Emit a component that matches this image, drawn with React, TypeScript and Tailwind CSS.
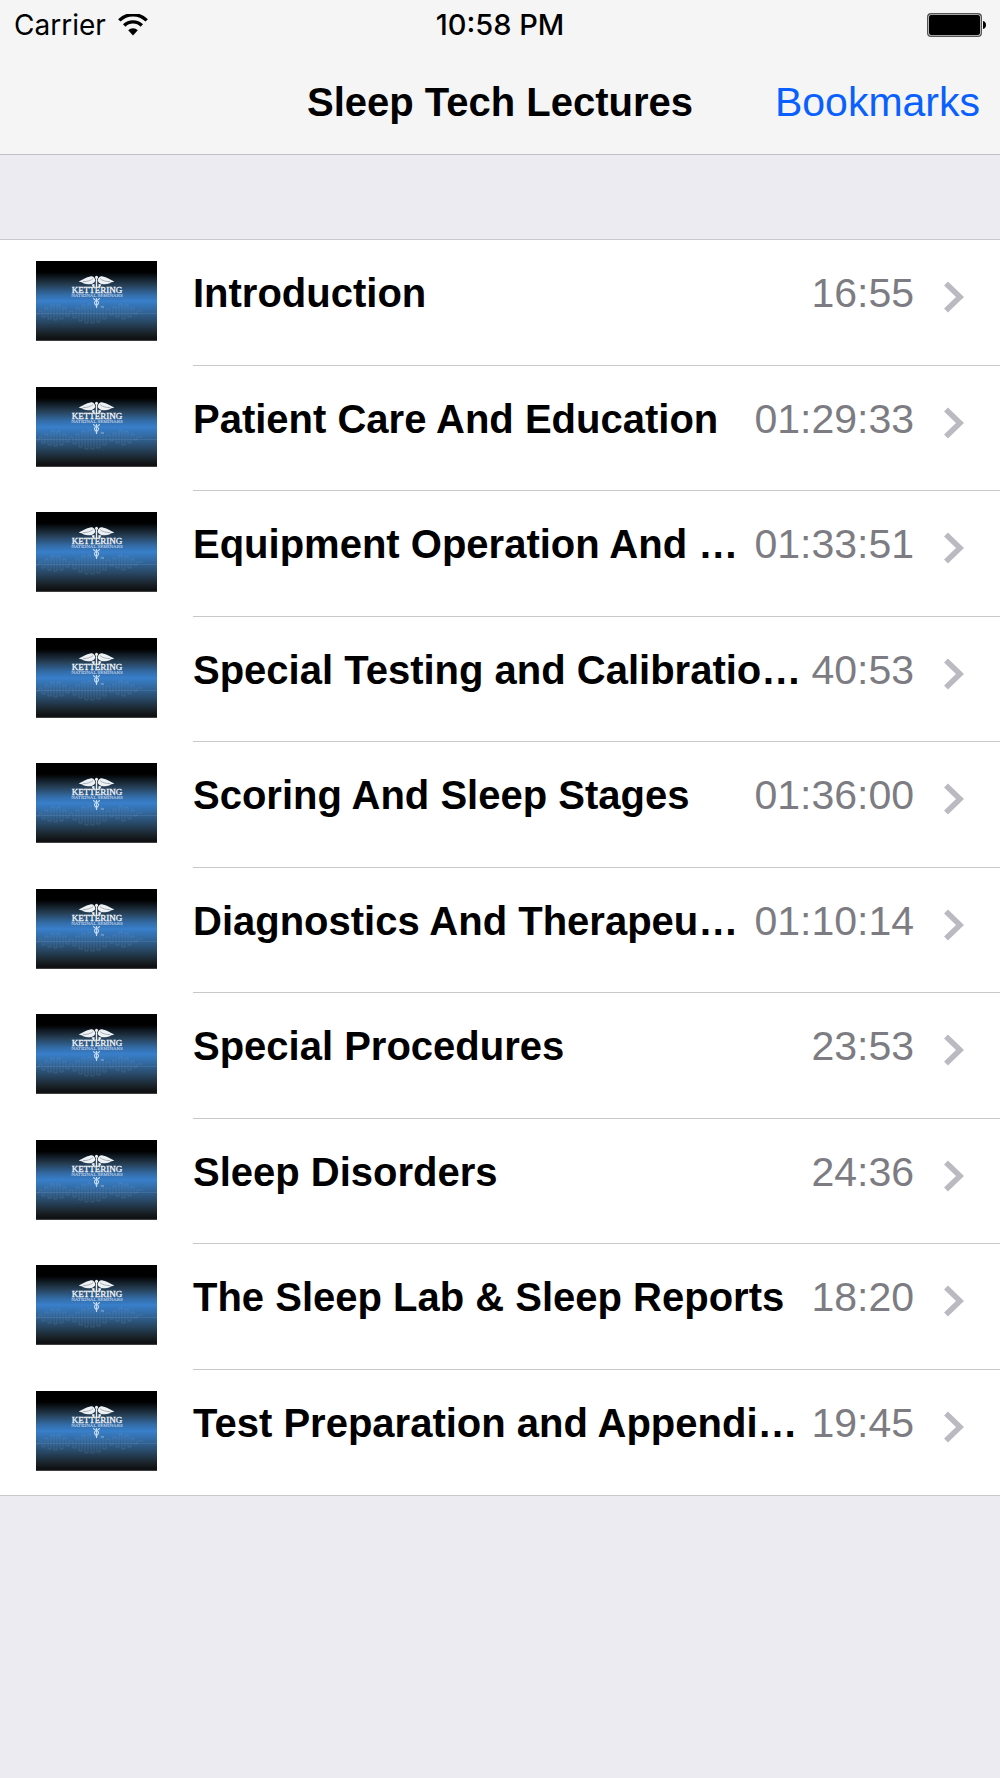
type Lecture = {
  id: number;
  title: string;
  duration: string;
};

const lectures: Lecture[] = [
  { id: 1, title: "Introduction", duration: "16:55" },
  { id: 2, title: "Patient Care And Education", duration: "01:29:33" },
  { id: 3, title: "Equipment Operation And …", duration: "01:33:51" },
  { id: 4, title: "Special Testing and Calibratio…", duration: "40:53" },
  { id: 5, title: "Scoring And Sleep Stages", duration: "01:36:00" },
  { id: 6, title: "Diagnostics And Therapeu…", duration: "01:10:14" },
  { id: 7, title: "Special Procedures", duration: "23:53" },
  { id: 8, title: "Sleep Disorders", duration: "24:36" },
  { id: 9, title: "The Sleep Lab & Sleep Reports", duration: "18:20" },
  { id: 10, title: "Test Preparation and Appendi…", duration: "19:45" },
];

function WifiIcon() {
  return (
    <svg width="30" height="22" viewBox="0 0 30 22" fill="none" stroke="black" aria-hidden="true">
      <path d="M1.300 6.400a19.400 19.400 0 0 1 27.400 0" strokeWidth="3.400" />
      <path d="M6.200 11.500a12.400 12.400 0 0 1 17.600 0" strokeWidth="3.400" />
      <path d="M10.200 16.200a6.800 6.800 0 0 1 9.600 0L15 21.400z" fill="black" stroke="none" />
    </svg>
  );
}

function BatteryIcon() {
  return (
    <svg width="59" height="24" viewBox="0 0 59 24" aria-hidden="true">
      <rect x="0.7" y="0.7" width="53.600" height="22.600" rx="3.400" fill="none" stroke="#555" strokeWidth="1.400" />
      <rect x="2" y="2" width="51" height="20" rx="2" />
      <path d="M56 8c2 0.400 3 2 3 4s-1 3.600-3 4z" />
    </svg>
  );
}

function Chevron() {
  return (
    <svg className="mt-[41px] shrink-0" width="20" height="32" viewBox="0 0 20 32" fill="none" aria-hidden="true">
      <path d="M2 2.500L16 16L2 29.500" stroke="#bbbac1" strokeWidth="5.600" />
    </svg>
  );
}

function Thumbnail() {
  return (
    <svg
      className="mt-[21px] shrink-0"
      width="121"
      height="80"
      viewBox="0 0 121 80"
      role="img"
      aria-label="Kettering National Seminars"
    >
      <defs>
        <linearGradient id="thumb" x1="0" y1="0" x2="0" y2="1">
          <stop offset="0" stopColor="#000" />
          <stop offset="0.14" stopColor="#000" />
          <stop offset="0.3" stopColor="#263f55" />
          <stop offset="0.42" stopColor="#336ba6" />
          <stop offset="0.5" stopColor="#387fca" />
          <stop offset="0.6" stopColor="#336ca6" />
          <stop offset="0.75" stopColor="#294a69" />
          <stop offset="0.9" stopColor="#1a2329" />
          <stop offset="0.98" stopColor="#0d0e10" />
          <stop offset="1" stopColor="#555" />
        </linearGradient>
      </defs>
      <rect width="121" height="80" fill="url(#thumb)" />

      {/* sleep wave */}
      <g fill="none" stroke="#8fb5d8" strokeOpacity="0.22" strokeWidth="0.8">
        <path d="M0 52.500H121" />
        <path d="M0 53h3v-3h3v6h3v-9h3v11h3v-14h3v15h3v-15h3v14h3v-11h3v8h3v-5h4v7h3v-10h3v13h3v-16h3v18h3v-19h3v19h3v-19h3v18h3v-16h3v13h3v-10h4v6h3v-8h3v10h3v-13h3v15h3v-14h3v12h3v-9h3v6h3v-3h6" />
      </g>

      {/* winged staff */}
      <g fill="#eef1f4">
        <path d="M59.300 20c-0.300-3.500-2-5-5-4.600c-4 0.600-7.300 3-11.600 5.200c2 0.700 3.500 0.800 4.500 1.600c2.500 1 4.500 1.300 6.500 1c2.800 0 4.600-1.200 5.600-3.200z" />
        <path d="M61.700 20c0.300-3.500 2-5 5-4.600c4 0.600 7.300 3 11.600 5.200c-2 0.700-3.500 0.800-4.500 1.600c-2.500 1-4.500 1.300-6.500 1c-2.800 0-4.600-1.200-5.600-3.200z" />
        <circle cx="60.500" cy="16.200" r="1.500" />
        <path d="M59.800 17h1.400v9h-1.400z" />
        <path d="M55.500 23.500l1.500 2.500h1.500v-3zM65.500 23.500l-1.500 2.500h-1.500v-3z" />
      </g>
      <g fill="none" stroke="#5c7285" strokeWidth="0.5">
        <path d="M47 20.600c4 0 8-1 10-3M74 20.600c-4 0-8-1-10-3" />
      </g>
      <g fill="none" stroke="#c6daed" strokeWidth="1.100">
        <path d="M57.500 37c0 3 6 2 5 5s-3 2-2 4" />
        <path d="M63.500 37c0 3-6 2-5 5s3 2 2 4" />
        <path d="M60.500 37v10" />
      </g>
      <path d="M65 46h3" stroke="#a9bfd4" strokeWidth="0.8" />

      <text
        x="61"
        y="32"
        textAnchor="middle"
        fill="#f3f5f7"
        stroke="#f3f5f7"
        strokeWidth="0.3"
        fontFamily="'Liberation Serif', serif"
        fontSize="9"
      >
        KETTERING
      </text>
      <text
        x="61"
        y="36"
        textAnchor="middle"
        fill="#c3d8ec"
        stroke="#c3d8ec"
        strokeWidth="0.1"
        fontFamily="'Liberation Serif', serif"
        fontSize="5"
      >
        NATIONAL SEMINARS
      </text>
    </svg>
  );
}

function StatusBar() {
  return (
    <div className="grid h-[50px] grid-cols-[1fr_auto_1fr] items-center px-[14px] font-[Inter,sans-serif] text-[28px] leading-[50px]">
      <div className="flex items-center gap-3">
        <span>Carrier</span>
        <WifiIcon />
      </div>
      <span className="text-[29px] font-medium">10:58 PM</span>
      <div className="flex justify-end">
        <BatteryIcon />
      </div>
    </div>
  );
}

function LectureRow({ lecture }: { lecture: Lecture }) {
  return (
    <li className="group">
      <a href={`#lecture-${lecture.id}`} className="flex h-[126px] gap-9 pl-9 group-even:h-[125px]">
        <Thumbnail />
        <div className="flex min-w-0 flex-1 items-start border-b border-[#c8c7cc] pr-9 group-last:border-b-0">
          <div className="mt-[29px] flex min-w-0 flex-1 items-baseline justify-between leading-[48px] whitespace-nowrap">
            <span className="text-[40px] font-bold">{lecture.title}</span>
            <span className="mr-[30px] text-[41px] text-[#7c7c82]">{lecture.duration}</span>
          </div>
          <Chevron />
        </div>
      </a>
    </li>
  );
}

export default function App() {
  return (
    <div className="min-h-screen bg-[#ebebf1] font-['Liberation_Sans',Arial,sans-serif] text-black">
      <header className="border-b border-[#c0c0c4] bg-[#f5f5f5]">
        <StatusBar />
        <nav className="grid h-[104px] grid-cols-[1fr_auto_1fr] items-start px-5 pt-7 leading-[48px] whitespace-nowrap">
          <h1 className="col-start-2 text-[40px] font-bold">Sleep Tech Lectures</h1>
          <a href="#bookmarks" className="justify-self-end text-[41px] text-[#0a60ff]">
            Bookmarks
          </a>
        </nav>
      </header>

      <main className="pt-[84px]">
        <ul className="border-y border-[#c8c7cc] bg-white">
          {lectures.map((lecture) => (
            <LectureRow key={lecture.id} lecture={lecture} />
          ))}
        </ul>
      </main>
    </div>
  );
}
